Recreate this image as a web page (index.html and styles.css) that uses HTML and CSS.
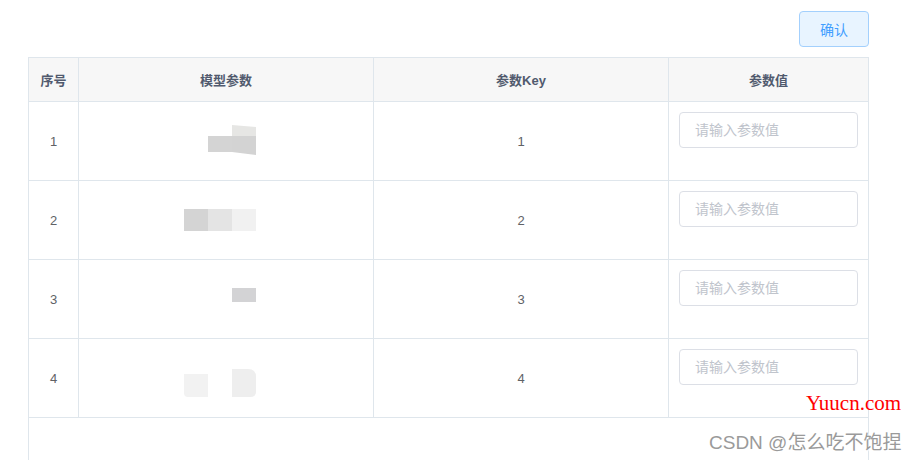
FILE: index.html
```html
<!DOCTYPE html>
<html>
<head>
    <title>模型参数</title>
    <link rel="stylesheet" href="styles.css">
</head>
<body>
    <div class="page">
        <div class="toolbar">
            <button class="btn-confirm" type="button">确认</button>
        </div>
        <div class="table-wrap">
            <table class="param-table">
                <colgroup>
                    <col class="col-index">
                    <col class="col-model">
                    <col class="col-key">
                    <col>
                </colgroup>
                <thead>
                    <tr>
                        <th>序号</th>
                        <th>模型参数</th>
                        <th>参数Key</th>
                        <th>参数值</th>
                    </tr>
                </thead>
                <tbody>
                    <tr>
                        <td>1</td>
                        <td>
                            <svg class="blur" width="72" height="44" viewBox="0 0 72 44">
                                <rect x="24" y="17" width="24" height="16" fill="#d4d4d4"/>
                                <path d="M48 6 L72 8 L72 17 L48 17 Z" fill="#e6e6e4"/>
                                <path d="M48 17 L72 17 L72 36 L48 33 Z" fill="#d3d3d3"/>
                            </svg>
                        </td>
                        <td>1</td>
                        <td><input class="value-input" type="text" placeholder="请输入参数值"></td>
                    </tr>
                    <tr>
                        <td>2</td>
                        <td>
                            <svg class="blur" width="72" height="44" viewBox="0 0 72 44">
                                <rect x="0" y="11" width="24" height="22" fill="#d4d4d4"/>
                                <rect x="24" y="11" width="24" height="22" fill="#e4e4e4"/>
                                <rect x="48" y="11" width="24" height="22" fill="#f1f1f1"/>
                            </svg>
                        </td>
                        <td>2</td>
                        <td><input class="value-input" type="text" placeholder="请输入参数值"></td>
                    </tr>
                    <tr>
                        <td>3</td>
                        <td>
                            <svg class="blur" width="72" height="44" viewBox="0 0 72 44">
                                <rect x="48" y="11" width="24" height="14" fill="#d3d3d5"/>
                            </svg>
                        </td>
                        <td>3</td>
                        <td><input class="value-input" type="text" placeholder="请输入参数值"></td>
                    </tr>
                    <tr>
                        <td>4</td>
                        <td>
                            <svg class="blur" width="72" height="44" viewBox="0 0 72 44">
                                <path d="M0 18 L24 18 L24 41 L4 41 Q0 41 0 37 Z" fill="#f2f2f2"/>
                                <path d="M48 13 L64 13 Q72 13 72 21 L72 36 Q72 41 66 41 L48 41 Z" fill="#eeeeee"/>
                                <rect x="73" y="16" width="1" height="4" fill="#4a6fc0"/>
                            </svg>
                        </td>
                        <td>4</td>
                        <td><input class="value-input" type="text" placeholder="请输入参数值"></td>
                    </tr>
                </tbody>
            </table>
        </div>
    </div>

    <div class="watermark-site">Yuucn.com</div>
    <div class="watermark-csdn">CSDN @怎么吃不饱捏</div>
</body>
</html>
```

FILE: styles.css
```css
html, body {
    margin: 0;
    height: 100%;
    overflow: hidden;
    background-color: white;
}
body {
    font-family: "Liberation Sans", "Noto Sans CJK SC", sans-serif;
    font-size: 13px;
    color: #606266;
}
.page {
    padding: 11px 47px 0 28px;
}
.toolbar {
    display: flex;
    justify-content: flex-end;
    margin-bottom: 10px;
}
.btn-confirm {
    width: 70px;
    height: 36px;
    padding: 0;
    border: 1px solid #a3d0fd;
    border-radius: 4px;
    background-color: #e8f4ff;
    color: #409eff;
    font-family: "Liberation Sans", "Noto Sans CJK SC", sans-serif;
    font-size: 14px;
    cursor: pointer;
}
.table-wrap {
    height: 402px;
    border: 1px solid #dfe6ec;
    border-bottom: none;
}
.param-table {
    width: 100%;
    table-layout: fixed;
    border-collapse: separate;
    border-spacing: 0;
}
.param-table .col-index {
    width: 50px;
}
.param-table .col-model,
.param-table .col-key {
    width: 295px;
}
.param-table th,
.param-table td {
    padding: 0;
    text-align: center;
    vertical-align: middle;
    border-right: 1px solid #dfe6ec;
    border-bottom: 1px solid #dfe6ec;
}
.param-table th:last-child,
.param-table td:last-child {
    border-right: none;
}
.param-table th {
    height: 43px;
    background-color: #f7f7f7;
    color: #515a6e;
    font-weight: bold;
    font-size: 13px;
}
.param-table td {
    height: 78px;
    font-size: 13px;
    color: #606266;
}
.param-table td:last-child {
    vertical-align: top;
    padding: 10px 10px 0;
    height: 68px;
}
.param-table .blur {
    display: block;
    margin: 0 auto;
    position: relative;
    left: -6px;
}
.value-input {
    display: block;
    box-sizing: border-box;
    width: 100%;
    height: 36px;
    margin-bottom: 22px;
    padding: 0 15px;
    border: 1px solid #dcdfe6;
    border-radius: 4px;
    font-family: "Liberation Sans", "Noto Sans CJK SC", sans-serif;
    font-size: 14px;
    color: #606266;
    outline: none;
}
.value-input::placeholder {
    color: #c0c4cc;
}
.watermark-site {
    position: absolute;
    left: 806px;
    top: 391px;
    font-family: "Liberation Serif", serif;
    font-size: 21px;
    color: #ff0000;
}
.watermark-csdn {
    position: absolute;
    left: 709px;
    top: 427px;
    font-family: "Liberation Sans", "Noto Sans CJK SC", sans-serif;
    font-size: 19px;
    color: #9a9a9a;
    text-shadow: 1px 1px 1px rgba(255, 255, 255, 0.8);
}
```
